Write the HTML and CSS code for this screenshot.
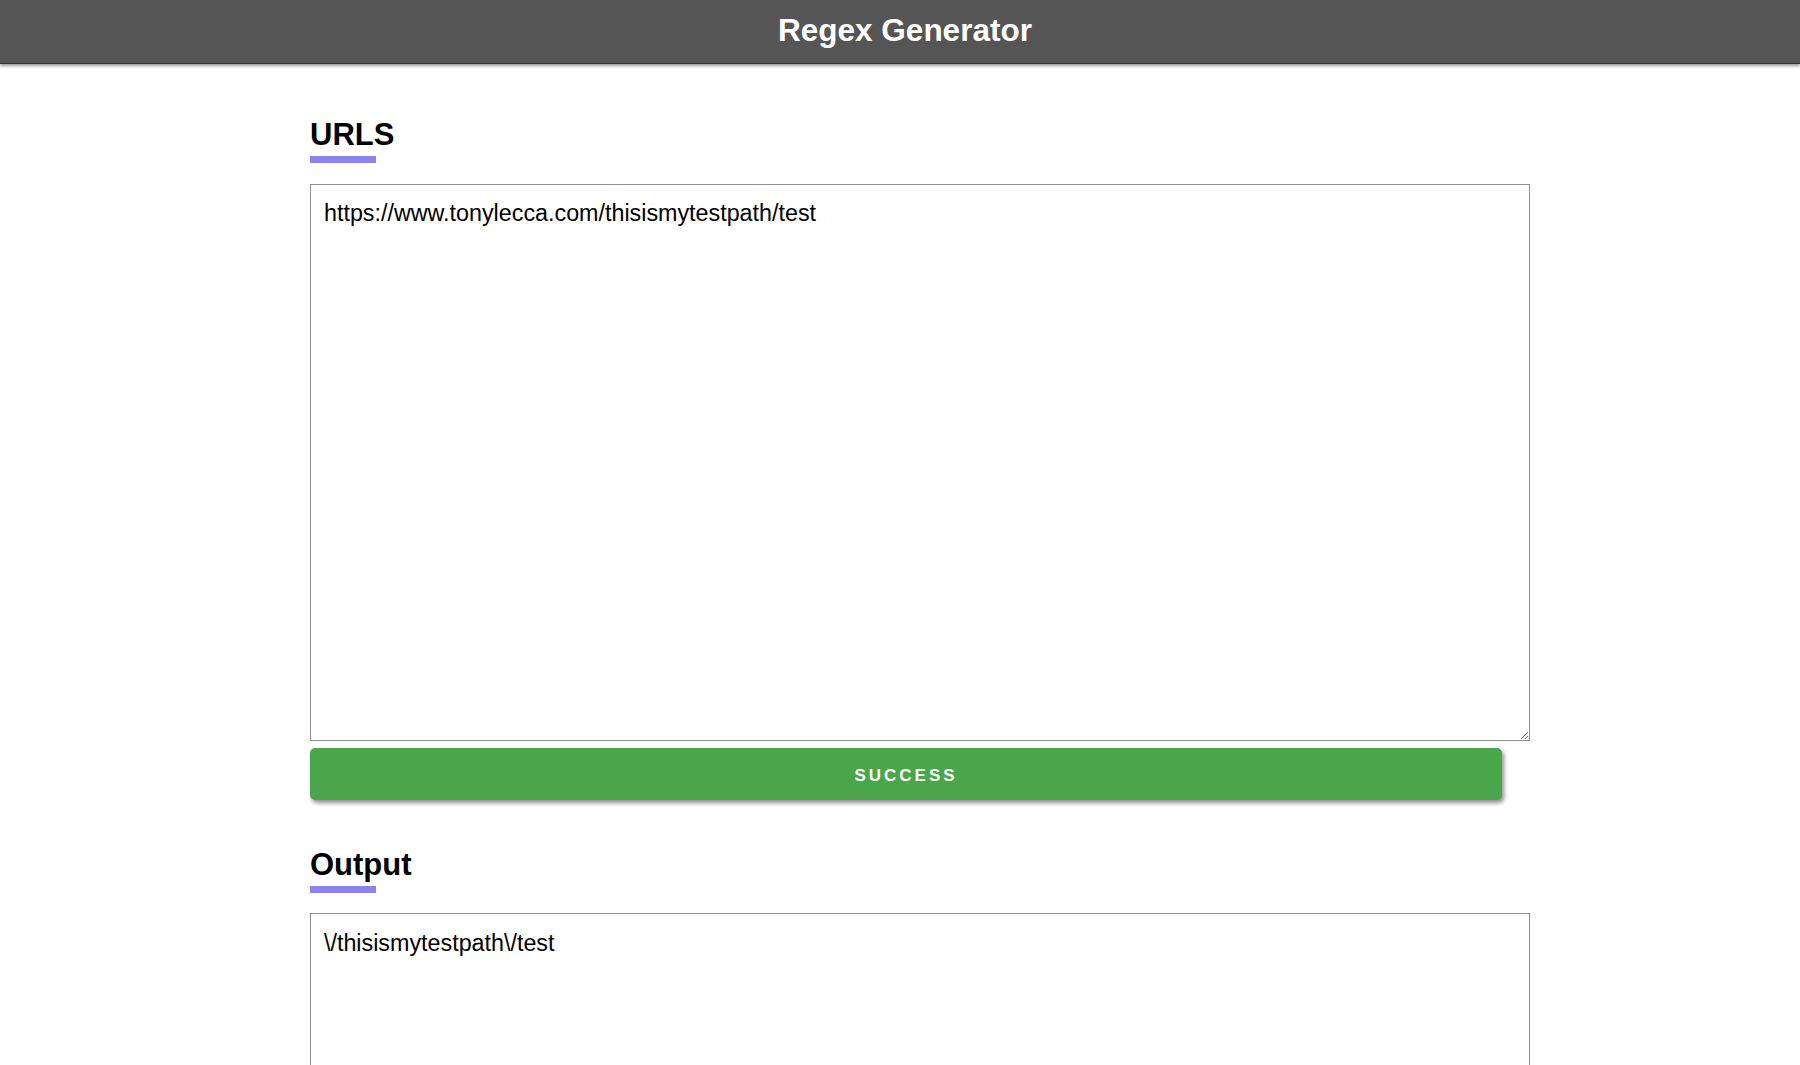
FILE: index.html
```html
<!DOCTYPE html>
<html lang="en">
<head>
<meta charset="utf-8">
<title>Regex Generator</title>
<link rel="stylesheet" href="styles.css">
</head>
<body>
<header class="topbar">
  <h1 class="topbar-title">Regex Generator</h1>
</header>
<main class="page">
  <section class="block">
    <h2 class="block-title">URLS</h2>
    <textarea class="field field-input">https://www.tonylecca.com/thisismytestpath/test</textarea>
    <button class="btn-success" type="button">SUCCESS</button>
  </section>
  <section class="block block-output">
    <h2 class="block-title">Output</h2>
    <textarea class="field field-output">\/thisismytestpath\/test</textarea>
  </section>
</main>
</body>
</html>
```

FILE: styles.css
```css
html, body {
  margin: 0;
  padding: 0;
  height: 100%;
  overflow: hidden;
  background: #ffffff;
  font-family: "Liberation Sans", Arial, sans-serif;
  color: #000;
}

.topbar {
  height: 64px;
  box-sizing: border-box;
  background: #555555;
  border-bottom: 1px solid #333333;
  box-shadow: 0 2px 3px rgba(0, 0, 0, 0.4);
  position: relative;
  z-index: 1;
  display: flex;
  align-items: flex-start;
  justify-content: center;
  padding-left: 10px;
}

.topbar-title {
  margin: 0;
  font-size: 31.5px;
  line-height: 60px;
  font-weight: 700;
  color: #ffffff;
}

.page {
  width: 1192px;
  margin-left: 310px;
  padding-top: 53px;
  display: flex;
  flex-direction: column;
}

.block {
  display: flex;
  flex-direction: column;
}

.block-output {
  margin-top: 47px;
}

.block-title {
  margin: 0;
  font-size: 31px;
  line-height: 36px;
  font-weight: 700;
  color: #000;
}

.block-title::after {
  content: "";
  display: block;
  width: 66px;
  height: 7px;
  margin-top: 3px;
  background: #8a84f0;
}

.field {
  box-sizing: content-box;
  width: 100%;
  margin: 21px 0 0;
  padding: 15px 13px 11px;
  border: 1px solid #8e8e8e;
  border-radius: 0;
  font-family: "Liberation Sans", Arial, sans-serif;
  font-size: 23.3px;
  line-height: 26px;
  color: #000;
  background: #fff;
  outline: none;
}

.field-input {
  height: 529px;
}

.field-output {
  margin-top: 20px;
  padding-top: 16px;
  height: 400px;
}

.btn-success {
  margin-top: 7px;
  width: 100%;
  height: 52px;
  padding: 3px 0 0;
  border: none;
  border-radius: 5px;
  background: #4aa64a;
  color: #ffffff;
  font-family: "Liberation Sans", Arial, sans-serif;
  font-size: 17px;
  font-weight: 700;
  letter-spacing: 3px;
  box-shadow: 2px 3px 4px rgba(0, 0, 0, 0.45);
  cursor: pointer;
}
```
